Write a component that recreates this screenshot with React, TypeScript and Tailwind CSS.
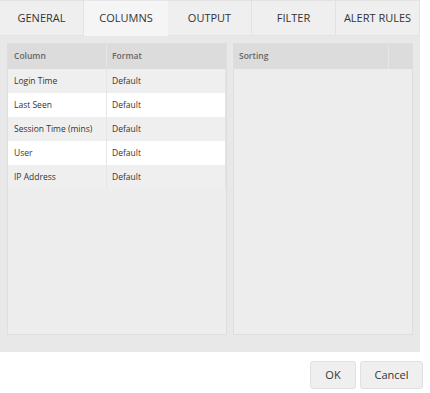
const tabs = ["GENERAL", "COLUMNS", "OUTPUT", "FILTER", "ALERT RULES"];

const rows = [
  { column: "Login Time", format: "Default" },
  { column: "Last Seen", format: "Default" },
  { column: "Session Time (mins)", format: "Default" },
  { column: "User", format: "Default" },
  { column: "IP Address", format: "Default" },
];

export default function App() {
  return (
    <div className="h-[393px] w-[430px] overflow-hidden bg-white font-['Open_Sans',sans-serif] text-[#333]">
      {/* tab strip */}
      <div className="flex h-[36px] w-[420px]">
        {tabs.map((tab, i) => (
          <div
            key={tab}
            className={
              i === 1
                ? "flex h-full w-[84px] items-center justify-center border-t border-[#e6e6e6] bg-[#f5f5f5] text-[11px]"
                : "flex h-full w-[84px] items-center justify-center border-t border-r border-b border-[#e2e2e2] bg-[#efefef] text-[11px]"
            }
          >
            {tab}
          </div>
        ))}
      </div>

      {/* content */}
      <div className="flex h-[316px] w-[420px] gap-[6px] bg-[#e8e8e8] px-[7px] pt-[7px] pb-[17px]">
        <div className="flex w-[220px] flex-col border border-[#dedede] bg-[#ededed]">
          <div className="flex h-[25px] bg-[#dcdcdc] text-[8.5px] font-semibold text-[#666]">
            <div className="flex w-[99px] items-center border-r border-[#e6e6e6] pl-[6px]">Column</div>
            <div className="flex flex-1 items-center pl-[5px]">Format</div>
          </div>
          {rows.map((row, i) => (
            <div
              key={row.column}
              className={
                i % 2 === 1
                  ? "flex h-[24px] bg-white text-[8.5px]"
                  : "flex h-[24px] bg-[#efefef] text-[8.5px]"
              }
            >
              <div className="flex w-[99px] items-center border-r border-[#e6e6e6] pl-[6px]">{row.column}</div>
              <div className="flex flex-1 items-center border-r border-[#e4e4e4] pl-[5px]">{row.format}</div>
            </div>
          ))}
        </div>

        <div className="flex w-[180px] flex-col border border-[#dedede] bg-[#ededed]">
          <div className="flex h-[25px] bg-[#dcdcdc] text-[8.5px] font-semibold text-[#666]">
            <div className="flex flex-1 items-center border-r border-[#e6e6e6] pl-[5px]">Sorting</div>
            <div className="w-[23px]" />
          </div>
        </div>
      </div>

      {/* footer buttons */}
      <div className="flex w-[430px] justify-end gap-[4px] pt-[9px] pr-[7px]">
        <button className="h-[28px] w-[46px] rounded-[3px] border border-[#e0e0e0] bg-[#efefef] text-[11px] text-[#333]">
          OK
        </button>
        <button className="h-[28px] w-[63px] rounded-[3px] border border-[#e0e0e0] bg-[#efefef] text-[11px] text-[#333]">
          Cancel
        </button>
      </div>
    </div>
  );
}
